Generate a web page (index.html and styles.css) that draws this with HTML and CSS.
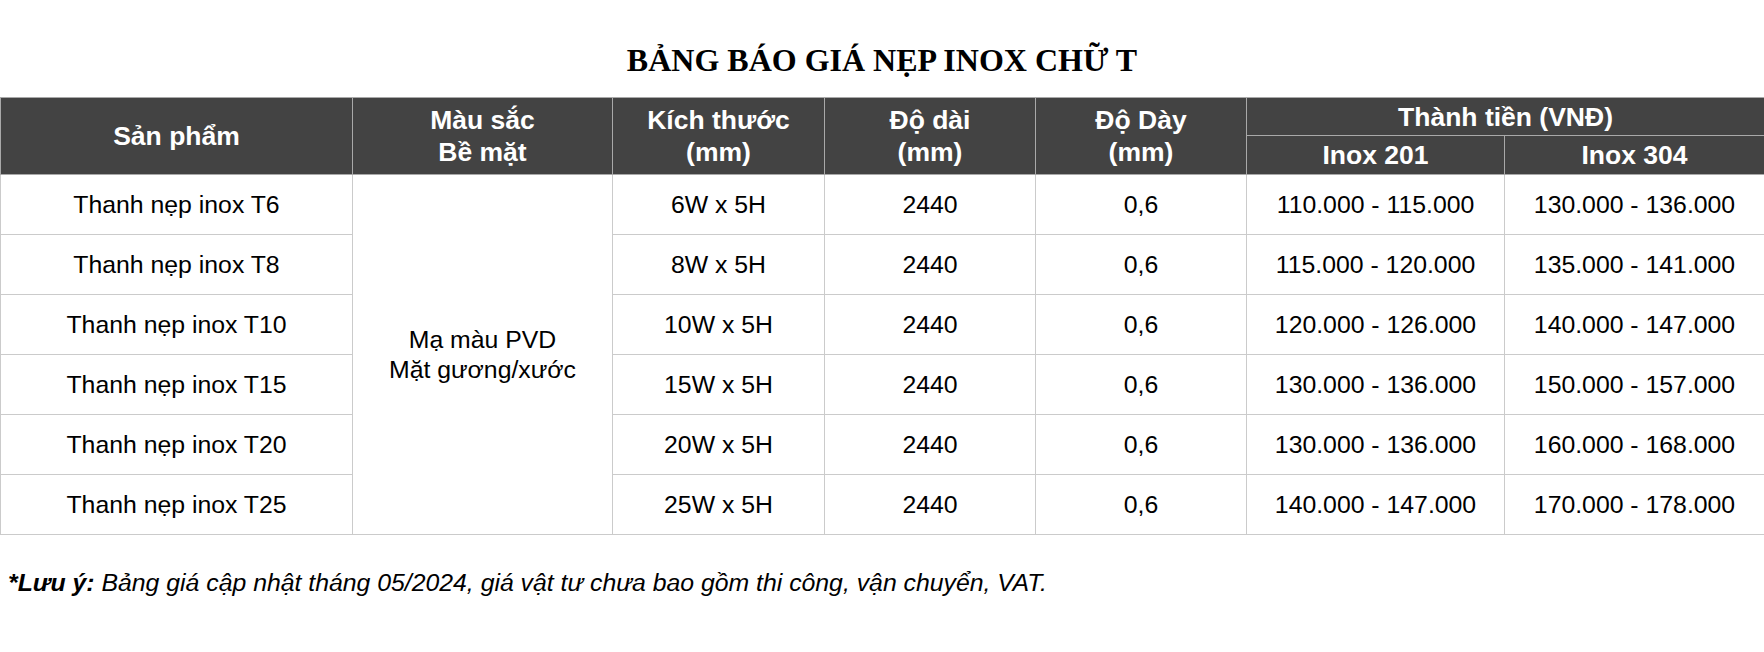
FILE: index.html
```html
<!DOCTYPE html>
<html lang="vi">
<head>
<meta charset="utf-8">
<title>Bảng báo giá nẹp inox chữ T</title>
<link rel="stylesheet" href="styles.css">
</head>
<body>
<h1 class="title">BẢNG BÁO GIÁ NẸP INOX CHỮ T</h1>
<table class="price-table">
  <colgroup>
    <col class="c1"><col class="c2"><col class="c3"><col class="c4"><col class="c5"><col class="c6"><col class="c7">
  </colgroup>
  <thead>
    <tr class="hr1">
      <th rowspan="2">Sản phẩm</th>
      <th rowspan="2">Màu sắc<br>Bề mặt</th>
      <th rowspan="2">Kích thước<br>(mm)</th>
      <th rowspan="2">Độ dài<br>(mm)</th>
      <th rowspan="2">Độ Dày<br>(mm)</th>
      <th colspan="2">Thành tiền (VNĐ)</th>
    </tr>
    <tr class="hr2">
      <th>Inox 201</th>
      <th>Inox 304</th>
    </tr>
  </thead>
  <tbody>
    <tr>
      <td>Thanh nẹp inox T6</td>
      <td rowspan="6" class="merged">Mạ màu PVD<br>Mặt gương/xước</td>
      <td>6W x 5H</td><td>2440</td><td>0,6</td><td>110.000 - 115.000</td><td>130.000 - 136.000</td>
    </tr>
    <tr>
      <td>Thanh nẹp inox T8</td>
      <td>8W x 5H</td><td>2440</td><td>0,6</td><td>115.000 - 120.000</td><td>135.000 - 141.000</td>
    </tr>
    <tr>
      <td>Thanh nẹp inox T10</td>
      <td>10W x 5H</td><td>2440</td><td>0,6</td><td>120.000 - 126.000</td><td>140.000 - 147.000</td>
    </tr>
    <tr>
      <td>Thanh nẹp inox T15</td>
      <td>15W x 5H</td><td>2440</td><td>0,6</td><td>130.000 - 136.000</td><td>150.000 - 157.000</td>
    </tr>
    <tr>
      <td>Thanh nẹp inox T20</td>
      <td>20W x 5H</td><td>2440</td><td>0,6</td><td>130.000 - 136.000</td><td>160.000 - 168.000</td>
    </tr>
    <tr>
      <td>Thanh nẹp inox T25</td>
      <td>25W x 5H</td><td>2440</td><td>0,6</td><td>140.000 - 147.000</td><td>170.000 - 178.000</td>
    </tr>
  </tbody>
</table>
<p class="note"><strong>*Lưu ý:</strong> Bảng giá cập nhật tháng 05/2024, giá vật tư chưa bao gồm thi công, vận chuyển, VAT.</p>
</body>
</html>
```
FILE: styles.css
```css
html, body {
  margin: 0;
  padding: 0;
  background: #fff;
  color: #000;
  font-family: "Liberation Sans", Arial, sans-serif;
}

.title {
  margin: 0;
  padding: 40px 0 17px;
  font-family: "Liberation Serif", "Times New Roman", serif;
  font-weight: bold;
  font-size: 32px;
  line-height: 40px;
  text-align: center;
}

.price-table {
  width: 1764px;
  border-collapse: collapse;
  table-layout: fixed;
}

.c1 { width: 352px; }
.c2 { width: 260px; }
.c3 { width: 212px; }
.c4 { width: 211px; }
.c5 { width: 211px; }
.c6 { width: 258px; }
.c7 { width: 260px; }

.price-table th,
.price-table td {
  border: 1px solid #cbcbcb;
  text-align: center;
  vertical-align: middle;
  padding: 0 4px;
}

.price-table th {
  background: #434343;
  color: #fff;
  font-weight: bold;
  font-size: 26.5px;
  line-height: 32px;
  border-color: #a9a9a9;
}

.hr1 { height: 38px; }
.hr2 { height: 39px; }

.price-table tbody tr { height: 60px; }

.price-table td {
  font-size: 24.8px;
  line-height: 30px;
}

.note {
  margin: 34px 0 0;
  padding-left: 8px;
  font-size: 24.8px;
  line-height: 28px;
  font-style: italic;
}

.note strong {
  font-weight: bold;
}
```
